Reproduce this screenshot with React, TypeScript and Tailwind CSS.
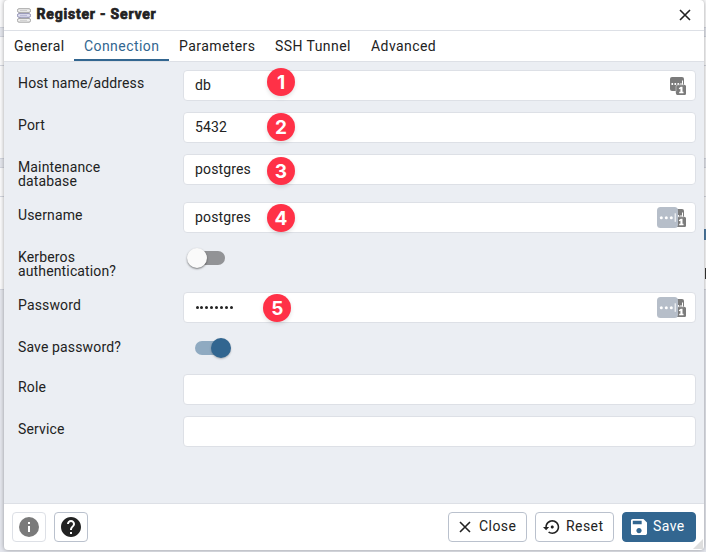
import React from "react";

const ROBOTO = "font-['Roboto','Liberation_Sans',sans-serif]";

function Backdrop() {
  return (
    <div className="flex h-full flex-col bg-white">
      <div className="h-[27px] shrink-0 bg-[#fafafb]" />
      <div className="h-[10px] shrink-0 border-y border-[#d3d6df] bg-[#e4e6ed]" />
      <div className="h-[29px] shrink-0 border-b border-[#d3d6df] bg-[#fafafb]" />
      <div className="h-[92px] shrink-0 bg-[#fafafb]" />
      <div className="h-[10px] shrink-0 border-y border-[#d3d6df] bg-[#e4e6ed]" />
      <div className="h-[29px] shrink-0 border-b border-[#d3d6df] bg-[#fafafb]" />
      <div className="flex h-[93px] shrink-0 flex-col items-end border-b border-[#d3d6df] bg-[#fafafb] pt-8">
        <div className="h-[11px] w-[2px] bg-[#4f7ba2]" />
        <div className="mt-7 h-[11px] w-[1px] bg-[#333]" />
      </div>
      <div className="grow bg-[#e4e6ed]" />
    </div>
  );
}

function ServerIcon() {
  return (
    <svg width="14" height="15" viewBox="0 0 14 15" fill="none" strokeWidth="1">
      <path d="M3 4.2v1.6M11 4.2v1.6M3 9.2v1.6M11 9.2v1.6" stroke="#999" />
      <rect x="0.5" y="0.7" width="13" height="3.7" rx="1.5" fill="#eee" stroke="#a6a6a6" />
      <rect x="0.5" y="5.6" width="13" height="3.7" rx="1.5" fill="#dfdff0" stroke="#9292b4" />
      <rect x="0.5" y="10.5" width="13" height="3.7" rx="1.5" fill="#eee" stroke="#a6a6a6" />
      <path d="M3 2.5h7M3 12.3h7" stroke="#ccc" />
      <path d="M3 7.4h7" stroke="#b7b7d4" />
    </svg>
  );
}

function CloseIcon() {
  return (
    <svg width="12" height="12" viewBox="0 0 12 12" fill="none" stroke="#222" strokeWidth="1.6">
      <path d="M1 1l10 10M11 1l-10 10" />
    </svg>
  );
}

/* Password manager marker with the number of saved logins. */
function VaultIcon() {
  return (
    <svg width="16" height="18" viewBox="0 0 16 18" className="shrink-0">
      <rect width="14" height="14" rx="2" fill="#7b7b7b" />
      <path d="M1.5 6h1.6v2H1.5zM4.5 6h1.6v2H4.5zM7.5 6h1.6v2H7.5zM10.5 6h1v2h-1zM12 3.5h1v4.5h-1z" fill="#fff" />
      <rect x="5.8" y="7.8" width="10.4" height="10.4" rx="2.5" fill="#7b7b7b" />
      <path d="M6 14.2V9.8a2 2 0 0 1 2-2h6" stroke="#eee" strokeWidth="0.5" fill="none" />
      <path d="M8.8 11.2l2-1.5h1.7v5h1v1.5H9.2v-1.5h1.2v-3l-1.2.6z" fill="#fff" />
    </svg>
  );
}

function FillIcon() {
  return (
    <svg width="21" height="21" viewBox="0 0 21 21" className="absolute -left-5 -top-[1px]">
      <rect width="21" height="21" rx="3.5" fill="#b6bec9" />
      <g fill="#fff">
        <circle cx="4.3" cy="10.7" r="1.5" />
        <circle cx="9.3" cy="10.7" r="1.5" />
        <circle cx="14.3" cy="10.7" r="1.5" />
        <rect x="17.7" y="6.3" width="1" height="8.5" />
      </g>
    </svg>
  );
}

function Adornment({ overlay }: { overlay?: boolean }) {
  return (
    <span className={overlay ? "relative mt-px" : "relative"}>
      <VaultIcon />
      {overlay && <span className="absolute left-[7.4px] top-[-0.6px]"><FillIcon /></span>}
    </span>
  );
}

function Badge({ n, at }: { n: number; at: string }) {
  return (
    <span
      className={`absolute flex size-7 items-center justify-center rounded-full bg-[#ff3147] font-['Inter','Liberation_Sans',sans-serif] text-[19px] font-bold leading-none tracking-normal text-white shadow-[0_2px_4px_rgba(0,0,0,0.12)] ${at}`}
    >
      {n}
    </span>
  );
}

type FieldProps = {
  label: string[];
  height: string;
  children: React.ReactNode;
};

function Row({ label, height, children }: FieldProps) {
  return (
    <div className={`flex shrink-0 items-start ${height}`}>
      <div className="w-[165px] shrink-0 pt-[6px] leading-[14px]">
        {label.map((line) => (
          <div key={line}>{line}</div>
        ))}
      </div>
      {children}
    </div>
  );
}

function Input({ value, children }: { value?: React.ReactNode; children?: React.ReactNode }) {
  return (
    <div className="relative flex h-[31px] grow items-center justify-between rounded border border-[#dde0e6] bg-white pl-[11px] pr-[9px]">
      <span>{value}</span>
      {children}
    </div>
  );
}

function PasswordDots() {
  return (
    <span className="ml-[0.5px] flex gap-[1.9px]">
      {Array.from({ length: 8 }, (_, i) => (
        <span key={i} className="size-[3px] rounded-full bg-[#222]" />
      ))}
    </span>
  );
}

const BUTTON = "flex h-[30px] items-center rounded border";

export default function App() {
  return (
    <div className={`relative h-[552px] w-[706px] overflow-hidden text-[14px] tracking-[0.14px] text-[#222] ${ROBOTO}`}>
      <Backdrop />
      <div className="absolute left-1 top-0 flex h-[550px] w-[700px] flex-col overflow-hidden rounded bg-white shadow-[0_0_4px_rgba(0,0,0,0.35)]">
        <header className="flex h-[31px] shrink-0 items-center border-b border-[#dde0e6] pl-[13px] pr-[13px]">
          <ServerIcon />
          <h1 className="ml-[5.5px] grow pb-[2px] text-[14px] font-bold tracking-[0.8px] [-webkit-text-stroke:0.7px_#222]">Register - Server</h1>
          <CloseIcon />
        </header>

        <nav className="flex h-[31px] shrink-0 border-b border-[#dde0e6] leading-[31px] tracking-[0.43px]">
          <span className="w-[70px] pl-[10px]">General</span>
          <span className="-mb-px h-[30px] w-[95px] border-b-2 border-[#326690] pl-[10px] text-[#326690]">Connection</span>
          <span className="w-[96px] pl-[10px]">Parameters</span>
          <span className="w-[96px] pl-[10px]">SSH Tunnel</span>
          <span className="pl-[10px]">Advanced</span>
        </nav>

        <main className="flex h-[441px] shrink-0 flex-col bg-[#ebeef3] pl-[14px] pr-2 pt-2">
          <Row label={["Host name/address"]} height="h-[42px]">
            <Input value="db">
              <Badge n={1} at="left-[83px] top-[-3px]" />
              <Adornment />
            </Input>
          </Row>
          <Row label={["Port"]} height="h-[42px]">
            <Input value="5432">
              <Badge n={2} at="left-[83px] top-0" />
            </Input>
          </Row>
          <Row label={["Maintenance", "database"]} height="h-[48px]">
            <Input value="postgres">
              <Badge n={3} at="left-[83px] top-[2px]" />
            </Input>
          </Row>
          <Row label={["Username"]} height="h-[42px]">
            <Input value="postgres">
              <Badge n={4} at="left-[83px] top-px" />
              <Adornment overlay />
            </Input>
          </Row>
          <Row label={["Kerberos", "authentication?"]} height="h-[48px]">
            <div className="ml-1 mt-[4px] flex h-5 w-[38px] items-center">
              <span className="z-10 size-5 shrink-0 rounded-full bg-[#fafafa] shadow-[0_1px_2px_rgba(0,0,0,0.5)]" />
              <span className="-ml-3 h-[14px] w-[30px] rounded-full bg-[#929396]" />
            </div>
          </Row>
          <Row label={["Password"]} height="h-[42px]">
            <Input value={<PasswordDots />}>
              <Badge n={5} at="left-[79.4px] top-px" />
              <Adornment overlay />
            </Input>
          </Row>
          <Row label={["Save password?"]} height="h-[40px]">
            <div className="ml-3 mt-[4px] flex h-5 items-center">
              <span className="h-[14px] w-[30px] rounded-full bg-[#8faac1]" />
              <span className="-ml-[14px] size-5 rounded-full bg-[#326690] shadow-[0_1px_2px_rgba(0,0,0,0.25)]" />
            </div>
          </Row>
          <Row label={["Role"]} height="h-[42px]">
            <Input />
          </Row>
          <Row label={["Service"]} height="h-[42px]">
            <Input />
          </Row>
        </main>

        <footer className="flex grow items-center border-t border-[#dde0e6] px-2 pb-px tracking-[0.43px]">
          <span className={`${BUTTON} w-[34px] justify-center border-[#dde0e6]`}>
            <svg width="20" height="20" viewBox="0 0 20 20">
              <circle cx="10" cy="10" r="10" fill="#7a7a7a" />
              <path d="M9 5h2v2H9zM9 9h2v6H9z" fill="#fff" />
            </svg>
          </span>
          <span className={`${BUTTON} ml-2 w-[34px] justify-center border-[#bac1cd]`}>
            <svg width="20" height="20" viewBox="2 2 20 20">
              <path fill="#222" d="M12 2C6.48 2 2 6.48 2 12s4.48 10 10 10 10-4.48 10-10S17.52 2 12 2zm1 17h-2v-2h2v2zm2.07-7.75-.9.92C13.45 12.9 13 13.5 13 15h-2v-.5c0-1.1.45-2.1 1.17-2.83l1.24-1.26c.37-.36.59-.86.59-1.41 0-1.1-.9-2-2-2s-2 .9-2 2H8c0-2.21 1.79-4 4-4s4 1.79 4 4c0 .88-.36 1.68-.93 2.25z" />
            </svg>
          </span>
          <span className={`${BUTTON} ml-auto w-[79px] border-[#bac1cd] pl-[10px]`}>
            <CloseIcon />
            <span className="ml-[8px]">Close</span>
          </span>
          <span className={`${BUTTON} ml-2 w-[79px] border-[#bac1cd] pl-[7px]`}>
            <svg width="17" height="16" viewBox="0 2.8 22 18.2">
              <path fill="#222" d="M14 12c0-1.1-.9-2-2-2s-2 .9-2 2 .9 2 2 2 2-.9 2-2zm-2-9c-4.97 0-9 4.03-9 9H0l4 4 4-4H5c0-3.87 3.13-7 7-7s7 3.13 7 7-3.13 7-7 7c-1.51 0-2.91-.49-4.06-1.3l-1.42 1.44C8.04 20.3 9.94 21 12 21c4.97 0 9-4.03 9-9s-4.03-9-9-9z" />
            </svg>
            <span className="ml-[6px]">Reset</span>
          </span>
          <span className={`${BUTTON} ml-2 w-[74px] border-[#326690] bg-[#326690] pl-2 text-white`}>
            <svg width="16" height="16" viewBox="3 3 18 18">
              <path fill="#fff" d="M17 3H5c-1.11 0-2 .9-2 2v14c0 1.1.89 2 2 2h14c1.1 0 2-.9 2-2V7l-4-4zm-5 16c-1.66 0-3-1.34-3-3s1.34-3 3-3 3 1.34 3 3-1.34 3-3 3zm3-10H5V5h10v4z" />
            </svg>
            <span className="ml-[6px]">Save</span>
          </span>
        </footer>
        <span className="absolute bottom-px right-px size-[10px] bg-[#dedede] [clip-path:polygon(100%_0,100%_100%,0_100%)]" />
      </div>
    </div>
  );
}
